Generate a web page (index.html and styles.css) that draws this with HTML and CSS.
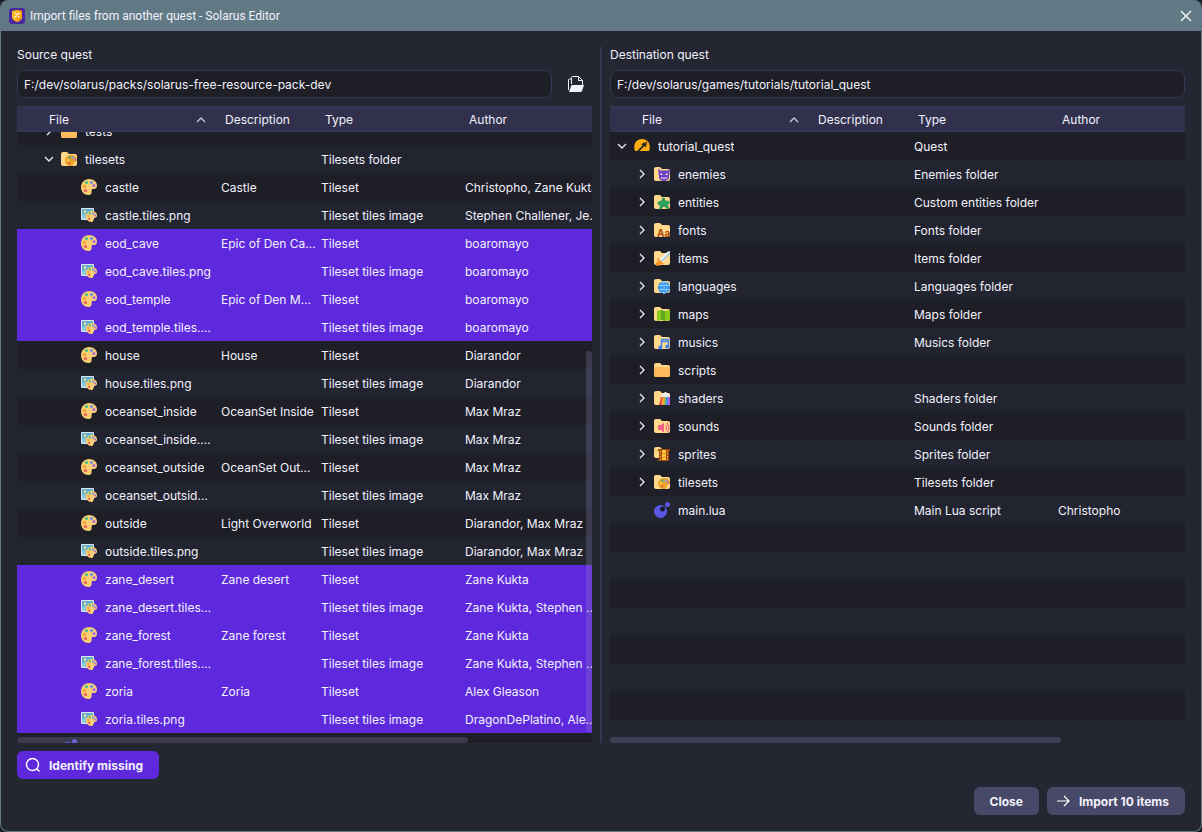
FILE: index.html
```
<!DOCTYPE html>
<html lang="en">
<head>
    <meta charset="UTF-8">
    <meta name="viewport" content="width=device-width, initial-scale=1.0">
    <title>Import files from another quest - Solarus Editor</title>
    <link rel="stylesheet" href="styles.css">
</head>
<body>
    <!-- Icon sprite -->
    <svg class="sprite" aria-hidden="true">
        <symbol id="i-down" viewBox="0 0 16 16"><path d="M4 6l4 4 4-4" fill="none" stroke="#e6e6f5" stroke-width="1.4"/></symbol>
        <symbol id="i-right" viewBox="0 0 16 16"><path d="M6 4l4 4-4 4" fill="none" stroke="#e6e6f5" stroke-width="1.4"/></symbol>
        <symbol id="i-up" viewBox="0 0 16 16"><path d="M4 10l4-4 4 4" fill="none" stroke="#c9c9dc" stroke-width="1.3"/></symbol>
        <symbol id="i-folder" viewBox="0 0 16 16">
            <path d="M0 3q0-2 2-2h4l2 2h6q2 0 2 2v8q0 2-2 2H2q-2 0-2-2z" fill="#ffd88a"/>
            <path d="M0 6q0-1 1-1h14q1 0 1 1v7q0 2-2 2H2q-2 0-2-2z" fill="#fdbb5c"/>
        </symbol>
        <symbol id="i-base" viewBox="0 0 16 16">
            <path d="M0 3q0-2 2-2h4l2 2h6q2 0 2 2v8q0 2-2 2H2q-2 0-2-2z" fill="#ffd88a"/>
        </symbol>
        <symbol id="i-palette" viewBox="0 0 16 16">
            <path d="M8 0c5 0 8 3 8 6.500c0 3-2 3.500-4 3.500c-2 0-1 2-1.500 4c-.5 1.500-1.500 2-3 2C3 16 0 12.500 0 8.500C0 3.500 3.500 0 8 0z" fill="#f6ce72"/>
            <circle cx="5.500" cy="3.500" r="1.600" fill="#45c48b"/>
            <circle cx="10.500" cy="3.500" r="1.600" fill="#6c95ea"/>
            <circle cx="13" cy="6.500" r="1.500" fill="#b466e6"/>
            <circle cx="3.500" cy="7.500" r="1.600" fill="#ff9c28"/>
            <circle cx="4.500" cy="11.500" r="1.600" fill="#f45b62"/>
        </symbol>
        <symbol id="i-image" viewBox="0 0 16 16">
            <rect y="1" width="13" height="12" rx="1" fill="#dcebf2"/>
            <rect x="1" y="2" width="11" height="10" fill="#63add0"/>
            <path d="M1 12V9l3-3 4 6z" fill="#8ed0dc"/>
            <circle cx="4" cy="4.500" r="1.200" fill="#f9e69a"/>
            <svg x="5" y="4" width="11" height="11"><use href="#i-palette"/></svg>
        </symbol>
        <symbol id="i-tilesets" viewBox="0 0 16 16">
            <use href="#i-base"/>
            <path d="M10.500 4C14 4 16 6 16 8.500c0 2-1.500 2.500-2.500 2.500s-.5 1.500-1 2.700c-.5.900-1.200 1.300-2.500 1.300c-3.500 0-6-2-6-5.500C4 6 7 4 10.500 4z" fill="#eba62a"/>
            <circle cx="8.500" cy="6.500" r="1.200" fill="#45b982"/>
            <circle cx="12" cy="6.500" r="1.200" fill="#8498e0"/>
            <circle cx="14.200" cy="8.500" r="1.100" fill="#b95fe0"/>
            <circle cx="6.800" cy="9.500" r="1.200" fill="#ffd04a"/>
            <circle cx="8" cy="12.200" r="1.100" fill="#e9574a"/>
        </symbol>
        <symbol id="i-quest" viewBox="0 0 16 16">
            <path d="M1 13C-1 8 1 1 8 1s9 7 7 12z" fill="#ffae10"/>
            <path d="M3 13l6-6-2-.5L10 4.500l2.500 1.500-.5 3.500-1.500-1.500L5.500 13z" fill="#24242a"/>
            <path d="M12.500 3.500l1 1-1.500 1.500-1-1z" fill="#24242a"/>
        </symbol>
        <symbol id="i-enemies" viewBox="0 0 16 16">
            <use href="#i-base"/>
            <path d="M5 2c0 2 1 2.500 2 2.500h6c1 0 2-.5 2-2.500 1 2 1 4 0 5l1 1-1 1v3q-1 3-5 3t-5-3V9L4 8l1-1C4 6 4 4 5 2z" fill="#6b41c9"/>
            <path d="M6.500 7l2 1v1h-2zM13.500 7l-2 1v1h2zM6.500 11q3.500 1.500 7 0l-1 2-1-.8-1.500.8-1.500-.8-1 .8z" fill="#f6e2c8"/>
        </symbol>
        <symbol id="i-entities" viewBox="0 0 16 16">
            <use href="#i-base"/>
            <path d="M8 6c-1-3 4-3 3 0l2 1c3-1 4 2 1.500 3L14 11l1 3.500-2 .5-2-2h-2l-2 2.500-2-.5 1-3-1-1C2.500 11 3 7.500 6 7z" fill="#2aa05a"/>
        </symbol>
        <symbol id="i-items" viewBox="0 0 16 16">
            <use href="#i-base"/>
            <path d="M16 1v3l-8 9-3-3 8-8z" fill="#e8f1f4"/>
            <path d="M16 2v2l-8 8-1-1z" fill="#9fc6d3"/>
            <path d="M4 8l6 6-1.500 1L7 13.500 4.500 16 2 15.500 1.800 13 4.500 11 3 9z" fill="#fb9520"/>
        </symbol>
        <symbol id="i-languages" viewBox="0 0 16 16">
            <use href="#i-base"/>
            <circle cx="10" cy="9.500" r="6" fill="#1c8cf0"/>
            <path d="M10 3.500v12M4.500 7.500h11M4.500 11.500h11" stroke="#a9d6ff" stroke-width=".8"/>
            <ellipse cx="10" cy="9.500" rx="3" ry="6" fill="none" stroke="#a9d6ff" stroke-width=".8"/>
        </symbol>
        <symbol id="i-maps" viewBox="0 0 16 16">
            <use href="#i-base"/>
            <path d="M3 5l4-1v10l-4 1z" fill="#8ccb1c"/>
            <path d="M7 4l4 1v10l-4-1z" fill="#5faa1e"/>
            <path d="M11 5l5-1v10l-5 1z" fill="#8ccb1c"/>
        </symbol>
        <symbol id="i-musics" viewBox="0 0 16 16">
            <use href="#i-base"/>
            <path d="M7.500 5v8M14.500 5v7M7 5.500h8M7 7.500h8" stroke="#3b82ef" stroke-width="1.400"/>
            <circle cx="6.300" cy="13.500" r="2" fill="#3b82ef"/>
            <circle cx="13.200" cy="12.500" r="2" fill="#3b82ef"/>
        </symbol>
        <symbol id="i-shaders" viewBox="0 0 16 16">
            <use href="#i-base"/>
            <path d="M9 3h1l1-1h1l1 1h2l1 4v2H7V6z" fill="#f1ece4"/>
            <path d="M7 7h2l-1 8H5z" fill="#ee5245"/>
            <path d="M9 7h2v8H8z" fill="#f8a52b"/>
            <path d="M11 7h1v8h-1.500z" fill="#50bd68"/>
            <path d="M12 7h2v8h-2z" fill="#4e92f1"/>
            <path d="M14 7h2v8h-2z" fill="#b35cec"/>
        </symbol>
        <symbol id="i-sounds" viewBox="0 0 16 16">
            <use href="#i-base"/>
            <path d="M4 8q0-1 1-1h2l3-2.500v10L7 12H5q-1 0-1-1z" fill="#ee6287"/>
            <path d="M11.500 7q2 2.500 0 5M13 5q4 4.500 0 9" fill="none" stroke="#ee6287" stroke-width="1.200"/>
        </symbol>
        <symbol id="i-sprites" viewBox="0 0 16 16">
            <path d="M0 3q0-2 2-2h4l2 2h2v9H2q-2 0-2-2z" fill="#ffd88a"/>
            <path d="M0 5h6" stroke="#f1b357"/>
            <path d="M4 3h12v2h-1v8h1l-2 2H3l2-2V5H4z" fill="#a64a0b"/>
            <path d="M8 4h4v10H8z" fill="#ffc83a"/>
            <path d="M8 7.500h4M8 11h4" stroke="#e98c12"/>
            <path d="M6.500 5v9M13.500 5v9" stroke="#ffc262" stroke-dasharray="1 1.500"/>
        </symbol>
        <symbol id="i-lua" viewBox="0 0 16 16">
            <circle cx="6.500" cy="9.500" r="6.500" fill="#5857e6"/>
            <circle cx="8.500" cy="7" r="2.500" fill="#1e1e26"/>
            <circle cx="13.500" cy="2.500" r="2.500" fill="#5857e6"/>
        </symbol>
    </svg>

    <div class="window">
        <header class="titlebar">
            <svg class="icon" viewBox="0 0 16 16" aria-hidden="true">
                <rect width="16" height="16" rx="3" fill="#4b2aa0"/>
                <path d="M3 3l5-1 5 1v6q0 3-5 5-5-2-5-5z" fill="#ffb414"/>
                <path d="M8 14q5-2 5-5V3L8 2z" fill="#fb9d0c"/>
                <path d="M5 10l5-5M5.500 4.500l5 5M9.500 4.500l1.500 1.500" stroke="#fff3cf" stroke-width="1.400"/>
            </svg>
            <h1>Import files from another quest - Solarus Editor</h1>
            <button type="button" class="window-close" aria-label="Close window">
                <svg class="icon" viewBox="0 0 16 16"><path d="M3 3l10 10M13 3L3 13" stroke="#fff" stroke-width="1.200"/></svg>
            </button>
        </header>

        <main class="content">
            <div class="panels">
                <section class="panel">
                    <label for="source">Source quest</label>
                    <div class="path-row">
                        <input type="text" id="source" value="F:/dev/solarus/packs/solarus-free-resource-pack-dev" readonly>
                        <button type="button" class="browse-btn" aria-label="Browse">
                            <svg class="icon" viewBox="0 0 16 16">
                                <path d="M3.500 8V1.500q0-1 1-1h6l4 4V9M10.500.5v4h4M3 3H1.500q-1 0-1 1v10" fill="none" stroke="#f2f2fc"/>
                                <path d="M3.500 9H16l-2 6q-.3 1-1.500 1H1z" fill="#f2f2fc"/>
                            </svg>
                        </button>
                    </div>
                    <div class="tree">
                        <div class="tree-view" id="sourceTree">
                            <table>
                                <colgroup><col class="col-file"><col class="col-desc"><col class="col-type"><col class="col-author"><col></colgroup>
                                <thead>
                                    <tr><th><div class="sort">File <svg class="icon"><use href="#i-up"/></svg></div></th><th>Description</th><th>Type</th><th>Author</th><th></th></tr>
                                </thead>
                                <tbody>
                                    <tr><td><div class="name level-1"><button class="arrow" aria-label="Expand"><svg class="icon"><use href="#i-right"/></svg></button><svg class="icon"><use href="#i-folder"/></svg><span>tests</span></div></td><td></td><td></td><td></td><td></td></tr>
                                    <tr><td><div class="name level-1"><button class="arrow" aria-label="Collapse"><svg class="icon"><use href="#i-down"/></svg></button><svg class="icon"><use href="#i-tilesets"/></svg><span>tilesets</span></div></td><td></td><td>Tilesets folder</td><td></td><td></td></tr>
                                    <tr><td><div class="name level-2"><svg class="icon"><use href="#i-palette"/></svg><span>castle</span></div></td><td>Castle</td><td>Tileset</td><td>Christopho, Zane Kukta</td><td></td></tr>
                                    <tr><td><div class="name level-2"><svg class="icon"><use href="#i-image"/></svg><span>castle.tiles.png</span></div></td><td></td><td>Tileset tiles image</td><td>Stephen Challener, Jetrel</td><td></td></tr>
                                    <tr class="selected"><td><div class="name level-2"><svg class="icon"><use href="#i-palette"/></svg><span>eod_cave</span></div></td><td>Epic of Den Cave</td><td>Tileset</td><td>boaromayo</td><td></td></tr>
                                    <tr class="selected"><td><div class="name level-2"><svg class="icon"><use href="#i-image"/></svg><span>eod_cave.tiles.png</span></div></td><td></td><td>Tileset tiles image</td><td>boaromayo</td><td></td></tr>
                                    <tr class="selected"><td><div class="name level-2"><svg class="icon"><use href="#i-palette"/></svg><span>eod_temple</span></div></td><td>Epic of Den Mountain</td><td>Tileset</td><td>boaromayo</td><td></td></tr>
                                    <tr class="selected"><td><div class="name level-2"><svg class="icon"><use href="#i-image"/></svg><span>eod_temple.tiles.png</span></div></td><td></td><td>Tileset tiles image</td><td>boaromayo</td><td></td></tr>
                                    <tr><td><div class="name level-2"><svg class="icon"><use href="#i-palette"/></svg><span>house</span></div></td><td>House</td><td>Tileset</td><td>Diarandor</td><td></td></tr>
                                    <tr><td><div class="name level-2"><svg class="icon"><use href="#i-image"/></svg><span>house.tiles.png</span></div></td><td></td><td>Tileset tiles image</td><td>Diarandor</td><td></td></tr>
                                    <tr><td><div class="name level-2"><svg class="icon"><use href="#i-palette"/></svg><span>oceanset_inside</span></div></td><td>OceanSet Inside</td><td>Tileset</td><td>Max Mraz</td><td></td></tr>
                                    <tr><td><div class="name level-2"><svg class="icon"><use href="#i-image"/></svg><span>oceanset_inside.tiles.png</span></div></td><td></td><td>Tileset tiles image</td><td>Max Mraz</td><td></td></tr>
                                    <tr><td><div class="name level-2"><svg class="icon"><use href="#i-palette"/></svg><span>oceanset_outside</span></div></td><td>OceanSet Outside</td><td>Tileset</td><td>Max Mraz</td><td></td></tr>
                                    <tr><td><div class="name level-2"><svg class="icon"><use href="#i-image"/></svg><span>oceanset_outside.tiles.png</span></div></td><td></td><td>Tileset tiles image</td><td>Max Mraz</td><td></td></tr>
                                    <tr><td><div class="name level-2"><svg class="icon"><use href="#i-palette"/></svg><span>outside</span></div></td><td>Light Overworld</td><td>Tileset</td><td>Diarandor, Max Mraz</td><td></td></tr>
                                    <tr><td><div class="name level-2"><svg class="icon"><use href="#i-image"/></svg><span>outside.tiles.png</span></div></td><td></td><td>Tileset tiles image</td><td>Diarandor, Max Mraz</td><td></td></tr>
                                    <tr class="selected"><td><div class="name level-2"><svg class="icon"><use href="#i-palette"/></svg><span>zane_desert</span></div></td><td>Zane desert</td><td>Tileset</td><td>Zane Kukta</td><td></td></tr>
                                    <tr class="selected"><td><div class="name level-2"><svg class="icon"><use href="#i-image"/></svg><span>zane_desert.tiles.png</span></div></td><td></td><td>Tileset tiles image</td><td>Zane Kukta, Stephen Challener</td><td></td></tr>
                                    <tr class="selected"><td><div class="name level-2"><svg class="icon"><use href="#i-palette"/></svg><span>zane_forest</span></div></td><td>Zane forest</td><td>Tileset</td><td>Zane Kukta</td><td></td></tr>
                                    <tr class="selected"><td><div class="name level-2"><svg class="icon"><use href="#i-image"/></svg><span>zane_forest.tiles.png</span></div></td><td></td><td>Tileset tiles image</td><td>Zane Kukta, Stephen Challener</td><td></td></tr>
                                    <tr class="selected"><td><div class="name level-2"><svg class="icon"><use href="#i-palette"/></svg><span>zoria</span></div></td><td>Zoria</td><td>Tileset</td><td>Alex Gleason</td><td></td></tr>
                                    <tr class="selected"><td><div class="name level-2"><svg class="icon"><use href="#i-image"/></svg><span>zoria.tiles.png</span></div></td><td></td><td>Tileset tiles image</td><td>DragonDePlatino, Alex Gleason</td><td></td></tr>
                                    <tr><td><div class="name level-1 leaf"><svg class="icon"><use href="#i-lua"/></svg></div></td><td></td><td></td><td></td><td></td></tr>
                                </tbody>
                            </table>
                        </div>
                        <div class="scroll-v"></div>
                        <div class="scroll-h"></div>
                    </div>
                </section>

                <div class="splitter"></div>

                <section class="panel">
                    <label for="destination">Destination quest</label>
                    <div class="path-row">
                        <input type="text" id="destination" value="F:/dev/solarus/games/tutorials/tutorial_quest" readonly>
                    </div>
                    <div class="tree">
                        <div class="tree-view">
                            <table>
                                <colgroup><col class="col-file"><col class="col-desc"><col class="col-type"><col class="col-author"><col></colgroup>
                                <thead>
                                    <tr><th><div class="sort">File <svg class="icon"><use href="#i-up"/></svg></div></th><th>Description</th><th>Type</th><th>Author</th><th></th></tr>
                                </thead>
                                <tbody>
                                    <tr><td><div class="name"><button class="arrow" aria-label="Collapse"><svg class="icon"><use href="#i-down"/></svg></button><svg class="icon"><use href="#i-quest"/></svg><span>tutorial_quest</span></div></td><td></td><td>Quest</td><td></td><td></td></tr>
                                    <tr><td><div class="name level-1"><button class="arrow" aria-label="Expand"><svg class="icon"><use href="#i-right"/></svg></button><svg class="icon"><use href="#i-enemies"/></svg><span>enemies</span></div></td><td></td><td>Enemies folder</td><td></td><td></td></tr>
                                    <tr><td><div class="name level-1"><button class="arrow" aria-label="Expand"><svg class="icon"><use href="#i-right"/></svg></button><svg class="icon"><use href="#i-entities"/></svg><span>entities</span></div></td><td></td><td>Custom entities folder</td><td></td><td></td></tr>
                                    <tr><td><div class="name level-1"><button class="arrow" aria-label="Expand"><svg class="icon"><use href="#i-right"/></svg></button><svg class="icon" viewBox="0 0 16 16"><use href="#i-base"/><text x="3" y="15" class="font-glyph">Aa</text></svg><span>fonts</span></div></td><td></td><td>Fonts folder</td><td></td><td></td></tr>
                                    <tr><td><div class="name level-1"><button class="arrow" aria-label="Expand"><svg class="icon"><use href="#i-right"/></svg></button><svg class="icon"><use href="#i-items"/></svg><span>items</span></div></td><td></td><td>Items folder</td><td></td><td></td></tr>
                                    <tr><td><div class="name level-1"><button class="arrow" aria-label="Expand"><svg class="icon"><use href="#i-right"/></svg></button><svg class="icon"><use href="#i-languages"/></svg><span>languages</span></div></td><td></td><td>Languages folder</td><td></td><td></td></tr>
                                    <tr><td><div class="name level-1"><button class="arrow" aria-label="Expand"><svg class="icon"><use href="#i-right"/></svg></button><svg class="icon"><use href="#i-maps"/></svg><span>maps</span></div></td><td></td><td>Maps folder</td><td></td><td></td></tr>
                                    <tr><td><div class="name level-1"><button class="arrow" aria-label="Expand"><svg class="icon"><use href="#i-right"/></svg></button><svg class="icon"><use href="#i-musics"/></svg><span>musics</span></div></td><td></td><td>Musics folder</td><td></td><td></td></tr>
                                    <tr><td><div class="name level-1"><button class="arrow" aria-label="Expand"><svg class="icon"><use href="#i-right"/></svg></button><svg class="icon"><use href="#i-folder"/></svg><span>scripts</span></div></td><td></td><td></td><td></td><td></td></tr>
                                    <tr><td><div class="name level-1"><button class="arrow" aria-label="Expand"><svg class="icon"><use href="#i-right"/></svg></button><svg class="icon"><use href="#i-shaders"/></svg><span>shaders</span></div></td><td></td><td>Shaders folder</td><td></td><td></td></tr>
                                    <tr><td><div class="name level-1"><button class="arrow" aria-label="Expand"><svg class="icon"><use href="#i-right"/></svg></button><svg class="icon"><use href="#i-sounds"/></svg><span>sounds</span></div></td><td></td><td>Sounds folder</td><td></td><td></td></tr>
                                    <tr><td><div class="name level-1"><button class="arrow" aria-label="Expand"><svg class="icon"><use href="#i-right"/></svg></button><svg class="icon"><use href="#i-sprites"/></svg><span>sprites</span></div></td><td></td><td>Sprites folder</td><td></td><td></td></tr>
                                    <tr><td><div class="name level-1"><button class="arrow" aria-label="Expand"><svg class="icon"><use href="#i-right"/></svg></button><svg class="icon"><use href="#i-tilesets"/></svg><span>tilesets</span></div></td><td></td><td>Tilesets folder</td><td></td><td></td></tr>
                                    <tr><td><div class="name level-1 leaf"><svg class="icon"><use href="#i-lua"/></svg><span>main.lua</span></div></td><td></td><td>Main Lua script</td><td>Christopho</td><td></td></tr>
                                </tbody>
                            </table>
                        </div>
                        <div class="scroll-h"></div>
                    </div>
                </section>
            </div>

            <div class="actions">
                <button type="button" class="btn primary">
                    <svg class="icon" viewBox="0 0 16 16"><circle cx="7.500" cy="7.500" r="6" fill="none" stroke="#fff" stroke-width="1.400"/><path d="M11.500 11.500l3 3" stroke="#fff" stroke-width="1.600"/></svg>
                    <span>Identify missing</span>
                </button>
            </div>
            <div class="actions end">
                <button type="button" class="btn"><span>Close</span></button>
                <button type="button" class="btn with-icon">
                    <svg class="icon" viewBox="0 0 16 16"><path d="M2 8h12M9 3l5 5-5 5" fill="none" stroke="#fff" stroke-width="1.200"/></svg>
                    <span>Import 10 items</span>
                </button>
            </div>
        </main>
    </div>

    <script>
        document.getElementById('sourceTree').scrollTop = 15;
    </script>
</body>
</html>
```
FILE: styles.css
```
:root {
    --window: #242631;
    --frame: #607984;
    --base: #1e1e26;
    --alternate: #222430;
    --header: #31314d;
    --border: #36385a;
    --button: #484868;
    --accent: #5e29dd;
    --handle: rgba(150, 145, 200, 0.25);
    --text: #f2f2fc;
}

* {
    margin: 0;
    padding: 0;
    box-sizing: border-box;
}

body {
    background-color: #1c1f28;
    color: var(--text);
    font-family: Inter, sans-serif;
    font-size: 12px;
    line-height: 16px;
}

button,
input {
    font: inherit;
    color: inherit;
    border: none;
    background: none;
}

.sprite {
    position: absolute;
    width: 0;
    height: 0;
}

.icon {
    display: block;
    flex: none;
    width: 16px;
    height: 16px;
}

.font-glyph {
    font-size: 10px;
    font-weight: 700;
    fill: #b34a10;
}

.window {
    display: flex;
    flex-direction: column;
    height: 100vh;
    background-color: var(--window);
    border: 1px solid var(--frame);
    border-top: none;
    border-radius: 8px;
    overflow: hidden;
}

.titlebar {
    display: flex;
    align-items: center;
    gap: 5px;
    height: 31px;
    padding: 0 7px 0 8px;
    background-color: var(--frame);
}

.titlebar h1 {
    flex: 1;
    font-family: Roboto, sans-serif;
    font-size: 12px;
    font-weight: 400;
}

.content {
    display: flex;
    flex: 1;
    flex-direction: column;
    gap: 8px;
    min-height: 0;
    padding: 16px;
}

.panels {
    display: flex;
    flex: 1;
    gap: 8px;
    min-height: 0;
}

.panel {
    display: flex;
    flex: 1;
    flex-direction: column;
    gap: 8px;
    min-width: 0;
}

.panel label {
    line-height: 15px;
}

.splitter {
    width: 2px;
    background-color: #36374e;
}

.path-row {
    display: flex;
    gap: 8px;
}

.path-row input {
    flex: 1;
    min-width: 0;
    height: 28px;
    padding: 0 6px;
    background-color: var(--base);
    border: 1px solid var(--border);
    border-radius: 8px;
}

.browse-btn {
    width: 32px;
    padding: 6px 8px;
}

/* Tree views */
.tree {
    position: relative;
    flex: 1;
    min-height: 0;
}

.tree-view {
    height: 100%;
    overflow: auto;
    scrollbar-width: none;
    background: repeating-linear-gradient(var(--base) 0 28px, var(--alternate) 28px 56px) 0 26px;
}

.tree table {
    width: 100%;
    min-width: 733px;
    table-layout: fixed;
    border-spacing: 0;
}

.col-file { width: 200px; }
.col-desc { width: 100px; }
.col-type { width: 144px; }
.col-author { width: 140px; }

.tree th {
    position: sticky;
    top: 0;
    height: 26px;
    padding: 2px 8px 0;
    background-color: var(--header);
    border: solid var(--border);
    border-width: 1px 0;
    font-weight: 400;
    text-align: left;
}

.tree th:first-child {
    padding-left: 32px;
}

.sort {
    display: flex;
    justify-content: space-between;
}

.tree td {
    height: 28px;
    padding: 2px 1px 0 4px;
    overflow: hidden;
    text-overflow: ellipsis;
    white-space: nowrap;
}

.tree td:first-child {
    padding: 0 3px 0 4px;
}

.tree tbody tr {
    background-color: var(--base);
}

.tree tbody tr:nth-child(even) {
    background-color: var(--alternate);
}

.tree tbody tr.selected {
    background-color: var(--accent);
}

.name {
    display: flex;
    align-items: center;
}

.name.level-1 { padding-left: 20px; }
.name.level-2 { padding-left: 60px; }
.name.leaf { padding-left: 40px; }

.name span {
    padding-top: 2px;
    margin-left: 8px;
    overflow: hidden;
    text-overflow: ellipsis;
}

.arrow {
    flex: none;
    margin-right: 4px;
}

.scroll-v,
.scroll-h {
    position: absolute;
    background-color: var(--handle);
    border-radius: 3px;
}

.scroll-v {
    top: 245px;
    right: 0;
    bottom: 11px;
    width: 6px;
}

.scroll-h {
    bottom: 0;
    left: 0;
    width: 78.4%;
    height: 6px;
}

/* Buttons */
.actions {
    display: flex;
    gap: 8px;
}

.actions.end {
    justify-content: flex-end;
}

.btn {
    display: flex;
    align-items: center;
    gap: 8px;
    height: 28px;
    padding: 0 16px;
    background-color: var(--button);
    border-radius: 6px;
    font-weight: 700;
}

.btn span {
    padding-top: 2px;
}

.btn.primary,
.btn.with-icon {
    padding-left: 8px;
}

.btn.primary {
    background-color: var(--accent);
}
```
